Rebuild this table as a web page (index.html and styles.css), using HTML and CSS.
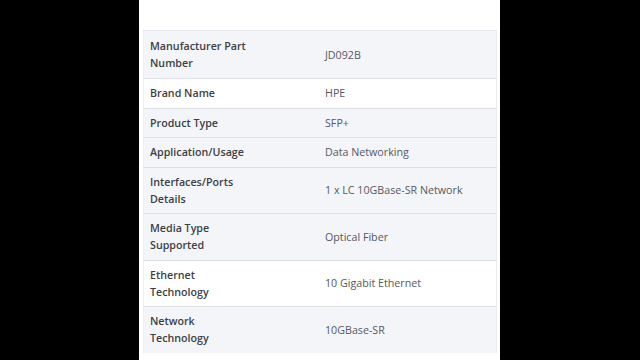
FILE: index.html
```html
<!DOCTYPE html>
<html lang="en">
<head>
<meta charset="utf-8">
<link rel="stylesheet" href="styles.css">
</head>
<body>
<div class="panel">
  <table class="specs">
    <tr class="shade first"><th>Manufacturer Part<br>Number</th><td>JD092B</td></tr>
    <tr><th>Brand Name</th><td>HPE</td></tr>
    <tr class="shade"><th>Product Type</th><td>SFP+</td></tr>
    <tr class="shade"><th>Application/Usage</th><td>Data Networking</td></tr>
    <tr class="shade"><th>Interfaces/Ports<br>Details</th><td>1 x LC 10GBase-SR Network</td></tr>
    <tr class="shade"><th>Media Type<br>Supported</th><td>Optical Fiber</td></tr>
    <tr><th>Ethernet<br>Technology</th><td>10 Gigabit Ethernet</td></tr>
    <tr class="shade"><th>Network<br>Technology</th><td>10GBase-SR</td></tr>
  </table>
</div>
</body>
</html>
```
FILE: styles.css
```css
html, body {
  margin: 0;
  padding: 0;
  background: #000;
  height: 100%;
}
body {
  display: flex;
  justify-content: flex-start;
  font-family: "Open Sans", "Liberation Sans", sans-serif;
}
.panel {
  margin-left: 139px;
  width: 361px;
  height: 360px;
  background: #fff;
  padding: 30px 3px 0 4px;
  box-sizing: border-box;
  overflow: hidden;
}
.specs {
  width: 354px;
  border-collapse: collapse;
  font-size: 10.7px;
  line-height: 17px;
  border-left: 1px solid #eceef1;
  border-right: 1px solid #eceef1;
}
.specs tr {
  background: #fff;
  border-top: 1px solid #dde1e6;
}
.specs tr.shade {
  background: #f3f5f8;
}
.specs tr.first {
  border-top: 1px solid #e3e6ea;
}
.specs th, .specs td {
  padding: 6px 6px 5.5px;
  vertical-align: middle;
  text-align: left;
}
.specs tr.first th, .specs tr.first td {
  padding-top: 7px;
  padding-bottom: 6px;
}
.specs th {
  width: 163px;
  font-weight: 600;
  color: #3d3f44;
}
.specs td {
  font-weight: 400;
  color: #56595e;
}
```
